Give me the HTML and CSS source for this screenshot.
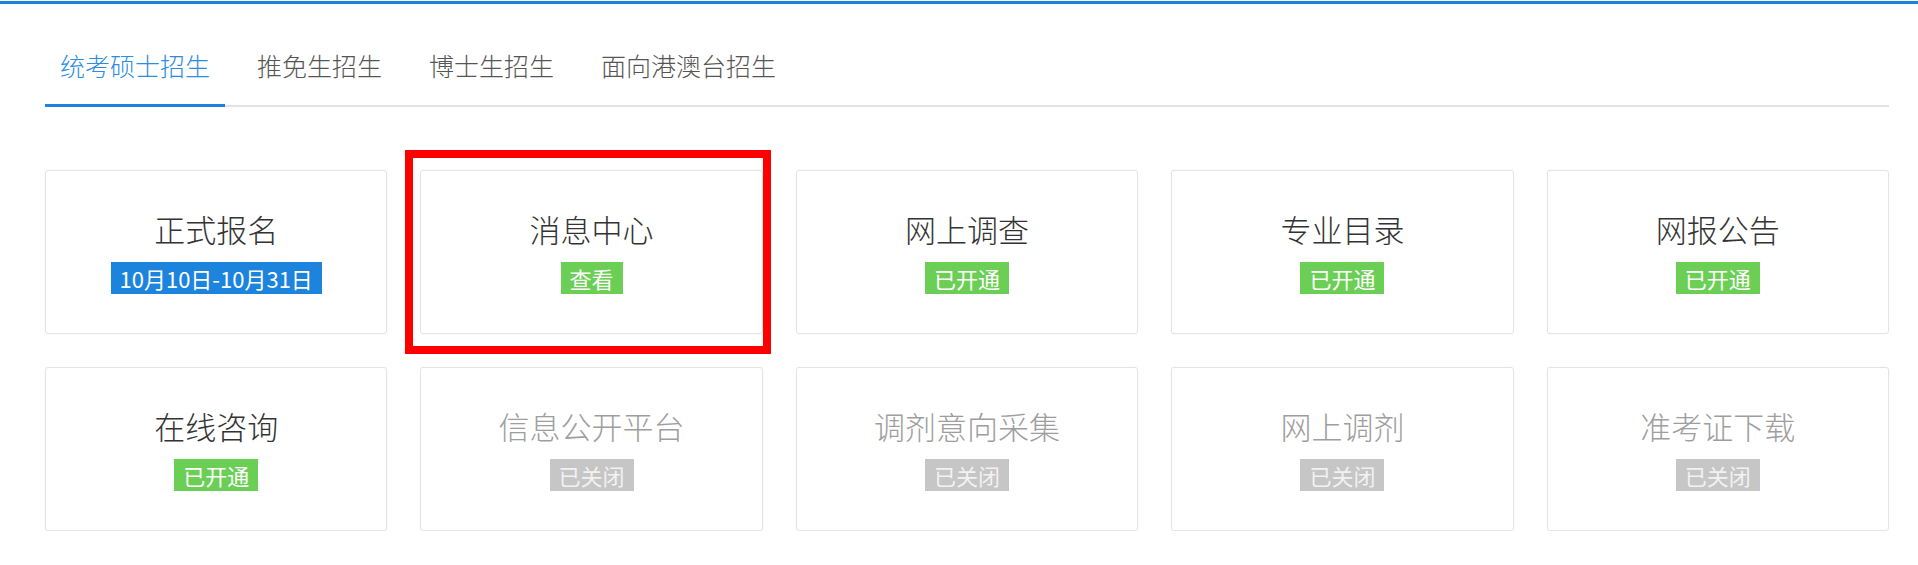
FILE: index.html
```html
<!DOCTYPE html>
<html lang="zh-CN">
<head>
  <meta charset="UTF-8">
  <title>研究生招生</title>
  <link rel="stylesheet" href="styles.css">
</head>
<body>
  <div class="topbar"></div>
  <div class="main">
    <ul class="tabs">
      <li class="tab active">统考硕士招生</li>
      <li class="tab">推免生招生</li>
      <li class="tab">博士生招生</li>
      <li class="tab">面向港澳台招生</li>
    </ul>

    <div class="grid">
      <div class="card">
        <div class="title">正式报名</div>
        <span class="badge blue">10月10日-10月31日</span>
      </div>
      <div class="card marked">
        <div class="title">消息中心</div>
        <span class="badge green">查看</span>
        <div class="mark"></div>
      </div>
      <div class="card">
        <div class="title">网上调查</div>
        <span class="badge green">已开通</span>
      </div>
      <div class="card">
        <div class="title">专业目录</div>
        <span class="badge green">已开通</span>
      </div>
      <div class="card">
        <div class="title">网报公告</div>
        <span class="badge green">已开通</span>
      </div>

      <div class="card">
        <div class="title">在线咨询</div>
        <span class="badge green">已开通</span>
      </div>
      <div class="card off">
        <div class="title">信息公开平台</div>
        <span class="badge gray">已关闭</span>
      </div>
      <div class="card off">
        <div class="title">调剂意向采集</div>
        <span class="badge gray">已关闭</span>
      </div>
      <div class="card off">
        <div class="title">网上调剂</div>
        <span class="badge gray">已关闭</span>
      </div>
      <div class="card off">
        <div class="title">准考证下载</div>
        <span class="badge gray">已关闭</span>
      </div>
    </div>
  </div>
</body>
</html>
```

FILE: styles.css
```css
body {
  margin: 0;
  background: #fff;
  font-family: "Microsoft YaHei", "Noto Sans CJK SC", sans-serif;
  color: #333;
}

.topbar {
  height: 3px;
  margin-top: 1px;
  background: #1b83dc;
}

.main {
  padding: 41px 29px 0 45px;
}

/* tabs */
.tabs {
  list-style: none;
  margin: 0;
  padding: 0;
  display: flex;
  border-bottom: 2px solid #e3e3e3;
}

.tab {
  padding: 0 15px 20px;
  margin-right: 17px;
  font-size: 25px;
  font-weight: 300;
  line-height: 40px;
  color: #555;
  cursor: pointer;
}

.tab.active {
  color: #2b8ce0;
  border-bottom: 3px solid #1b83dc;
  margin-bottom: -2px;
  padding-bottom: 19px;
}

/* cards */
.grid {
  margin-top: 63px;
  display: grid;
  grid-template-columns: repeat(5, 1fr);
  gap: 33px;
}

.card {
  position: relative;
  height: 164px;
  box-sizing: border-box;
  border: 1px solid #e4e4e4;
  border-radius: 3px;
  box-shadow: 0 0 2px rgba(0,0,0,0.06);
  display: flex;
  flex-direction: column;
  align-items: center;
  justify-content: center;
}

.title {
  font-size: 31px;
  font-weight: 300;
  line-height: 35px;
  margin-bottom: 16px;
  color: #333;
}

.card.off .title {
  color: #9e9e9e;
}

.badge {
  display: inline-block;
  height: 32px;
  line-height: 32px;
  padding: 0 9px;
  font-size: 22px;
  color: #fff;
}

.badge.blue {
  background: #1c84dc;
}

.badge.green {
  background: #6bcf55;
}

.badge.gray {
  background: #c6c6c6;
  color: #f2f2f2;
}

/* red highlight frame */
.mark {
  position: absolute;
  top: -21px;
  bottom: -21px;
  left: -16px;
  right: -9px;
  border: 8px solid #ff0000;
}
```
